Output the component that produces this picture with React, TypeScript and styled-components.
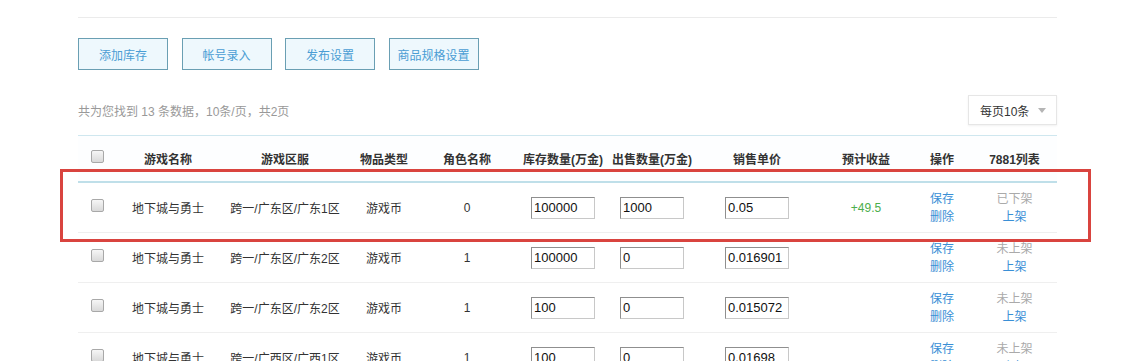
import styled, { createGlobalStyle } from 'styled-components'

const GlobalStyle = createGlobalStyle`
  html, body {
    margin: 0;
    padding: 0;
    background: #fff;
    overflow: hidden;
  }
  body {
    font-family: 'Liberation Sans', 'Noto Sans CJK SC', sans-serif;
    font-size: 12px;
    color: #333;
  }
`

const Page = styled.div`
  width: 979px;
  padding: 17px 0 0 78px;
  height: 344px;
`

const TopLine = styled.div`
  border-top: 1px solid #ebebeb;
`

const Toolbar = styled.div`
  display: flex;
  gap: 13.5px;
  margin-top: 20px;
`

const ToolButton = styled.button`
  width: 90px;
  height: 32px;
  padding: 0;
  border: 1px solid #6a9fb3;
  background: #eef8fd;
  color: #4a9dd4;
  font-family: 'Liberation Sans', 'Noto Sans CJK SC', sans-serif;
  font-size: 12px;
  cursor: pointer;
`

const SummaryRow = styled.div`
  display: flex;
  align-items: center;
  justify-content: space-between;
  margin-top: 25px;
  height: 30px;
`

const Summary = styled.span`
  color: #999;
  font-size: 12px;
`

const PageSize = styled.div`
  width: 89px;
  height: 30px;
  box-sizing: border-box;
  border: 1px solid #e6e6e6;
  box-shadow: 0 1px 2px rgba(0, 0, 0, 0.06);
  display: flex;
  align-items: center;
  justify-content: space-between;
  padding: 0 10px 0 11px;
  font-size: 12px;
  color: #333;
`

const Caret = styled.span`
  width: 0;
  height: 0;
  border-left: 4px solid transparent;
  border-right: 4px solid transparent;
  border-top: 5px solid #b5b5b5;
`

const TableWrap = styled.div`
  position: relative;
  margin-top: 10px;
`

const cols = '38px 104px 130px 68px 98px 94px 84px 126px 92px 60px 85px'

const HeadRow = styled.div`
  display: grid;
  grid-template-columns: ${cols};
  height: 45px;
  border-top: 1px solid #cfe7ef;
  border-bottom: 2px solid #bfdfe9;
  background: #fdfeff;
`

const BodyRow = styled.div`
  display: grid;
  grid-template-columns: ${cols};
  height: 49px;
  border-bottom: 1px solid #efefef;
`

const Cell = styled.div<{ $tone?: 'green' }>`
  display: flex;
  flex-direction: column;
  align-items: center;
  justify-content: center;
  font-size: 12px;
  color: ${(p) => (p.$tone === 'green' ? '#4cae4c' : '#333')};
  white-space: nowrap;
`

const HeadCell = styled(Cell)`
  font-weight: bold;
  color: #333;
`

const Check = styled.span`
  width: 11px;
  height: 11px;
  border: 1px solid #a8a8a8;
  border-radius: 2px;
  background: linear-gradient(#f6f6f6, #d9d9d9);
  margin-top: -5px;
`

const NumInput = styled.input`
  width: 64px;
  height: 22px;
  box-sizing: border-box;
  padding: 0 2px;
  border: 1px solid;
  border-color: #8f8f8f #c8c8c8 #c8c8c8 #8f8f8f;
  font-family: 'Liberation Sans', sans-serif;
  font-size: 13px;
  color: #111;
  outline: none;
`

const Link = styled.a<{ $muted?: boolean }>`
  display: block;
  line-height: 18px;
  color: ${(p) => (p.$muted ? '#aaa' : '#3a8fd6')};
  text-decoration: none;
  cursor: pointer;
`

const Highlight = styled.div`
  position: absolute;
  left: -18px;
  top: 34px;
  width: 1031px;
  height: 73px;
  box-sizing: border-box;
  border: 3px solid #d9443f;
  pointer-events: none;
`

const headers = [
  '游戏名称',
  '游戏区服',
  '物品类型',
  '角色名称',
  '库存数量(万金)',
  '出售数量(万金)',
  '销售单价',
  '预计收益',
  '操作',
  '7881列表',
]

const rows = [
  { server: '跨一/广东区/广东1区', role: '0', stock: '100000', sell: '1000', price: '0.05', profit: '+49.5', status: '已下架' },
  { server: '跨一/广东区/广东2区', role: '1', stock: '100000', sell: '0', price: '0.016901', profit: '', status: '未上架' },
  { server: '跨一/广东区/广东2区', role: '1', stock: '100', sell: '0', price: '0.015072', profit: '', status: '未上架' },
  { server: '跨一/广西区/广西1区', role: '1', stock: '100', sell: '0', price: '0.01698', profit: '', status: '未上架' },
]

const App = () => {
  return (
    <Page>
      <GlobalStyle />
      <TopLine />
      <Toolbar>
        <ToolButton>添加库存</ToolButton>
        <ToolButton>帐号录入</ToolButton>
        <ToolButton>发布设置</ToolButton>
        <ToolButton>商品规格设置</ToolButton>
      </Toolbar>
      <SummaryRow>
        <Summary>共为您找到 13 条数据，10条/页，共2页</Summary>
        <PageSize>
          每页10条
          <Caret />
        </PageSize>
      </SummaryRow>
      <TableWrap>
        <HeadRow>
          <HeadCell>
            <Check />
          </HeadCell>
          {headers.map((h) => (
            <HeadCell key={h}>{h}</HeadCell>
          ))}
        </HeadRow>
        {rows.map((r, i) => (
          <BodyRow key={i}>
            <Cell>
              <Check />
            </Cell>
            <Cell>地下城与勇士</Cell>
            <Cell>{r.server}</Cell>
            <Cell>游戏币</Cell>
            <Cell>{r.role}</Cell>
            <Cell>
              <NumInput defaultValue={r.stock} />
            </Cell>
            <Cell>
              <NumInput defaultValue={r.sell} />
            </Cell>
            <Cell>
              <NumInput defaultValue={r.price} />
            </Cell>
            <Cell $tone='green'>{r.profit}</Cell>
            <Cell>
              <Link>保存</Link>
              <Link>删除</Link>
            </Cell>
            <Cell>
              <Link $muted>{r.status}</Link>
              <Link>上架</Link>
            </Cell>
          </BodyRow>
        ))}
        <Highlight />
      </TableWrap>
    </Page>
  )
}

export default App
